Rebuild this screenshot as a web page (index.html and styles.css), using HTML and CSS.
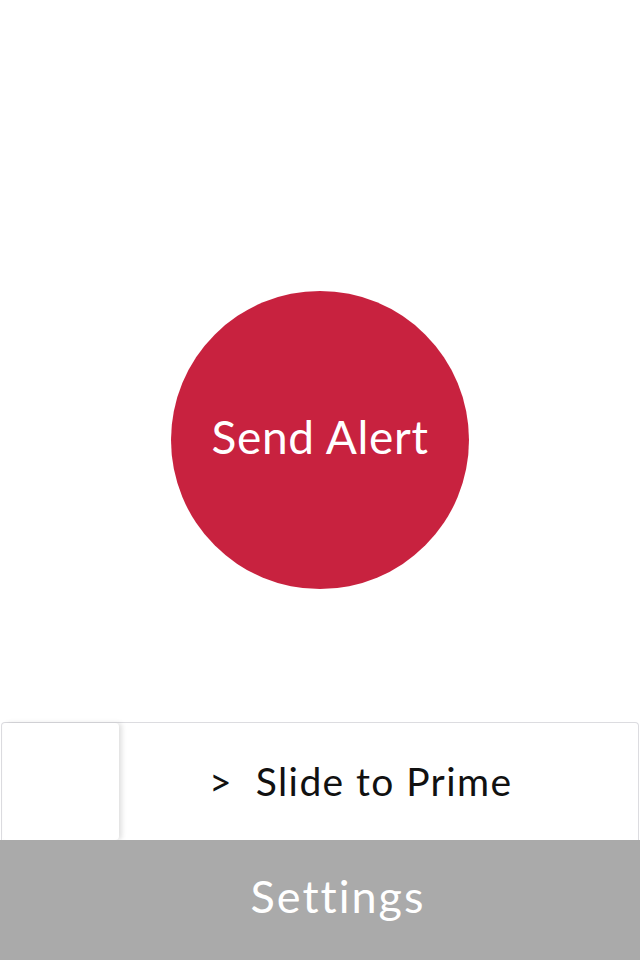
FILE: index.html
```html
<!DOCTYPE html>
<html>
<head>
<meta charset="utf-8">
<link rel="stylesheet" href="styles.css">
</head>
<body>
<div class="app">
  <main class="main">
    <button class="alert-btn">Send Alert</button>
  </main>
  <div class="slider">
    <div class="knob"></div>
    <div class="slider-label">&gt;&nbsp; Slide to Prime</div>
  </div>
  <div class="settings">Settings</div>
</div>
</body>
</html>
```

FILE: styles.css
```css
html, body {
  margin: 0;
  padding: 0;
  background: #ffffff;
}
.app {
  width: 640px;
  height: 960px;
  display: flex;
  flex-direction: column;
  font-family: "Lato", "Open Sans", sans-serif;
}
.main {
  flex: 1;
  display: flex;
  justify-content: center;
  align-items: flex-start;
  padding-top: 291px;
  box-sizing: border-box;
}
.alert-btn {
  width: 298px;
  height: 298px;
  border-radius: 50%;
  border: none;
  background: #c8223f;
  color: #ffffff;
  font-family: inherit;
  font-size: 46px;
  font-weight: 400;
  padding: 0 0 8px 0;
  letter-spacing: 0.7px;
}
.slider {
  height: 118px;
  margin: 0 1px;
  border: 1px solid #dcdce0;
  border-bottom: none;
  border-radius: 4px 4px 0 0;
  display: flex;
  box-sizing: border-box;
  background: #fff;
}
.knob {
  width: 116px;
  margin-left: 1px;
  border-radius: 4px;
  background: #fff;
  box-shadow: 3px 0 5px rgba(0,0,0,0.12);
}
.slider-label {
  flex: 1;
  display: flex;
  align-items: center;
  padding-left: 90px;
  padding-bottom: 2px;
  font-size: 39px;
  letter-spacing: 1.4px;
  color: #111;
}
.settings {
  height: 120px;
  background: #aaaaaa;
  color: #ffffff;
  display: flex;
  align-items: center;
  justify-content: center;
  padding-left: 36px;
  padding-bottom: 9px;
  box-sizing: border-box;
  font-size: 45px;
  letter-spacing: 2px;
}
```
